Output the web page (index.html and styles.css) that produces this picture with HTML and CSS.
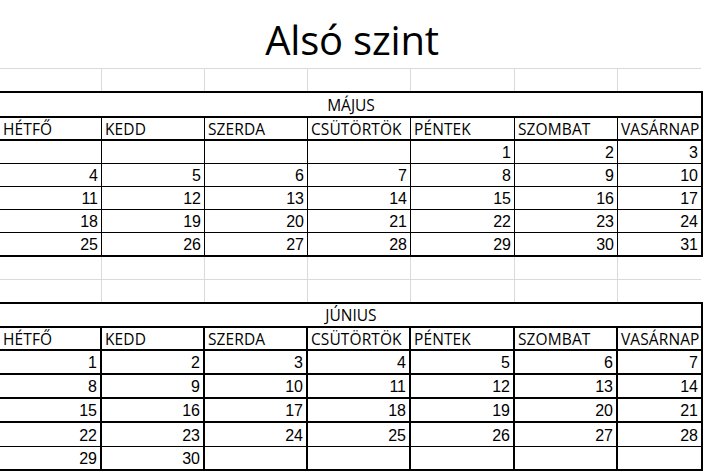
FILE: index.html
```html
<!DOCTYPE html>
<html lang="hu">
<head>
<meta charset="utf-8">
<title>Alsó szint</title>
<link rel="stylesheet" href="styles.css">
</head>
<body>
<div class="sheet">
  <div class="title">Alsó szint</div>

  <div class="blank first"><span></span><span></span><span></span><span></span><span></span><span></span><span></span></div>

  <div class="cal may">
    <div class="month">MÁJUS</div>
    <div class="row head"><span>HÉTFŐ</span><span>KEDD</span><span>SZERDA</span><span>CSÜTÖRTÖK</span><span>PÉNTEK</span><span>SZOMBAT</span><span>VASÁRNAP</span></div>
    <div class="row"><span></span><span></span><span></span><span></span><span>1</span><span>2</span><span>3</span></div>
    <div class="row"><span>4</span><span>5</span><span>6</span><span>7</span><span>8</span><span>9</span><span>10</span></div>
    <div class="row"><span>11</span><span>12</span><span>13</span><span>14</span><span>15</span><span>16</span><span>17</span></div>
    <div class="row"><span>18</span><span>19</span><span>20</span><span>21</span><span>22</span><span>23</span><span>24</span></div>
    <div class="row last"><span>25</span><span>26</span><span>27</span><span>28</span><span>29</span><span>30</span><span>31</span></div>
  </div>

  <div class="blank"><span></span><span></span><span></span><span></span><span></span><span></span><span></span></div>
  <div class="blank lined"><span></span><span></span><span></span><span></span><span></span><span></span><span></span></div>

  <div class="cal june">
    <div class="month">JÚNIUS</div>
    <div class="row head"><span>HÉTFŐ</span><span>KEDD</span><span>SZERDA</span><span>CSÜTÖRTÖK</span><span>PÉNTEK</span><span>SZOMBAT</span><span>VASÁRNAP</span></div>
    <div class="row"><span>1</span><span>2</span><span>3</span><span>4</span><span>5</span><span>6</span><span>7</span></div>
    <div class="row"><span>8</span><span>9</span><span>10</span><span>11</span><span>12</span><span>13</span><span>14</span></div>
    <div class="row"><span>15</span><span>16</span><span>17</span><span>18</span><span>19</span><span>20</span><span>21</span></div>
    <div class="row tall thin"><span>22</span><span>23</span><span>24</span><span>25</span><span>26</span><span>27</span><span>28</span></div>
    <div class="row last"><span>29</span><span>30</span><span></span><span></span><span></span><span></span><span></span></div>
  </div>
</div>
</body>
</html>
```

FILE: styles.css
```css
html, body {
  margin: 0;
  padding: 0;
  background: #ffffff;
}

body {
  width: 704px;
  height: 471px;
  overflow: hidden;
}

.sheet {
  margin-left: -3px;
  width: 706px;
}

.title {
  height: 68px;
  width: 704px;
  display: flex;
  justify-content: center;
  align-items: flex-end;
  box-sizing: border-box;
  padding-bottom: 8px;
  padding-left: 6px;
  font-family: "Open Sans", "Noto Sans", sans-serif;
  font-size: 40px;
  line-height: 40px;
  letter-spacing: -0.2px;
  color: #000;
}

/* empty gridline rows */
.blank {
  display: grid;
  grid-template-columns: 105px 103px 103px 103px 104px 103px 83px;
  width: 704px;
  height: 22px;
}

.blank.first,
.blank.lined {
  border-top: 1px solid #dadada;
}

.blank span {
  border-right: 1px solid #dadada;
}

.blank span:last-child {
  border-right: none;
}

/* calendars */
.cal {
  width: 706px;
  box-sizing: border-box;
  border-top: 2px solid #000;
  border-right: 2px solid #000;
  border-bottom: 2px solid #000;
}

.month {
  height: 23px;
  border-bottom: 2px solid #000;
  display: flex;
  justify-content: center;
  align-items: flex-end;
  padding-left: 4px;
  padding-bottom: 0;
  font-family: "Open Sans", "Noto Sans", sans-serif;
  font-size: 15.5px;
  line-height: 16px;
  box-sizing: border-box;
}

.may .month {
  height: 25px;
  padding-bottom: 3px;
}

.june .month {
  height: 24px;
  padding-bottom: 3px;
}

.row {
  display: grid;
  grid-template-columns: 105px 103px 103px 103px 104px 103px 83px;
  height: 22px;
  border-bottom: 1px solid #000;
  font-family: "Liberation Sans", Arial, sans-serif;
  font-size: 16px;
  line-height: 16px;
}

.row span {
  box-sizing: border-box;
  border-right: 1px solid #000;
  display: flex;
  align-items: flex-end;
  justify-content: flex-end;
  padding: 0 3px 2px 0;
  color: #000;
}

.row span:last-child {
  border-right: none;
}

.row.head {
  height: 21px;
  border-bottom: 2px solid #000;
  font-family: "Open Sans", "Noto Sans", sans-serif;
  font-size: 15.5px;
  line-height: 16px;
  letter-spacing: 0.1px;
}

.row.head span {
  justify-content: flex-start;
  padding: 0 0 2px 3px;
}

.row.head span:first-child {
  padding-left: 6px;
}

.row.last {
  border-bottom: none;
}

.june .row {
  border-bottom-width: 2px;
}

.june .row span {
  border-right-width: 2px;
}

.june .row span:last-child {
  border-right: none;
}

.june .row.tall {
  height: 23px;
}

.june .row.thin {
  border-bottom-width: 1px;
}

.june .row.last {
  border-bottom: none;
}
```
